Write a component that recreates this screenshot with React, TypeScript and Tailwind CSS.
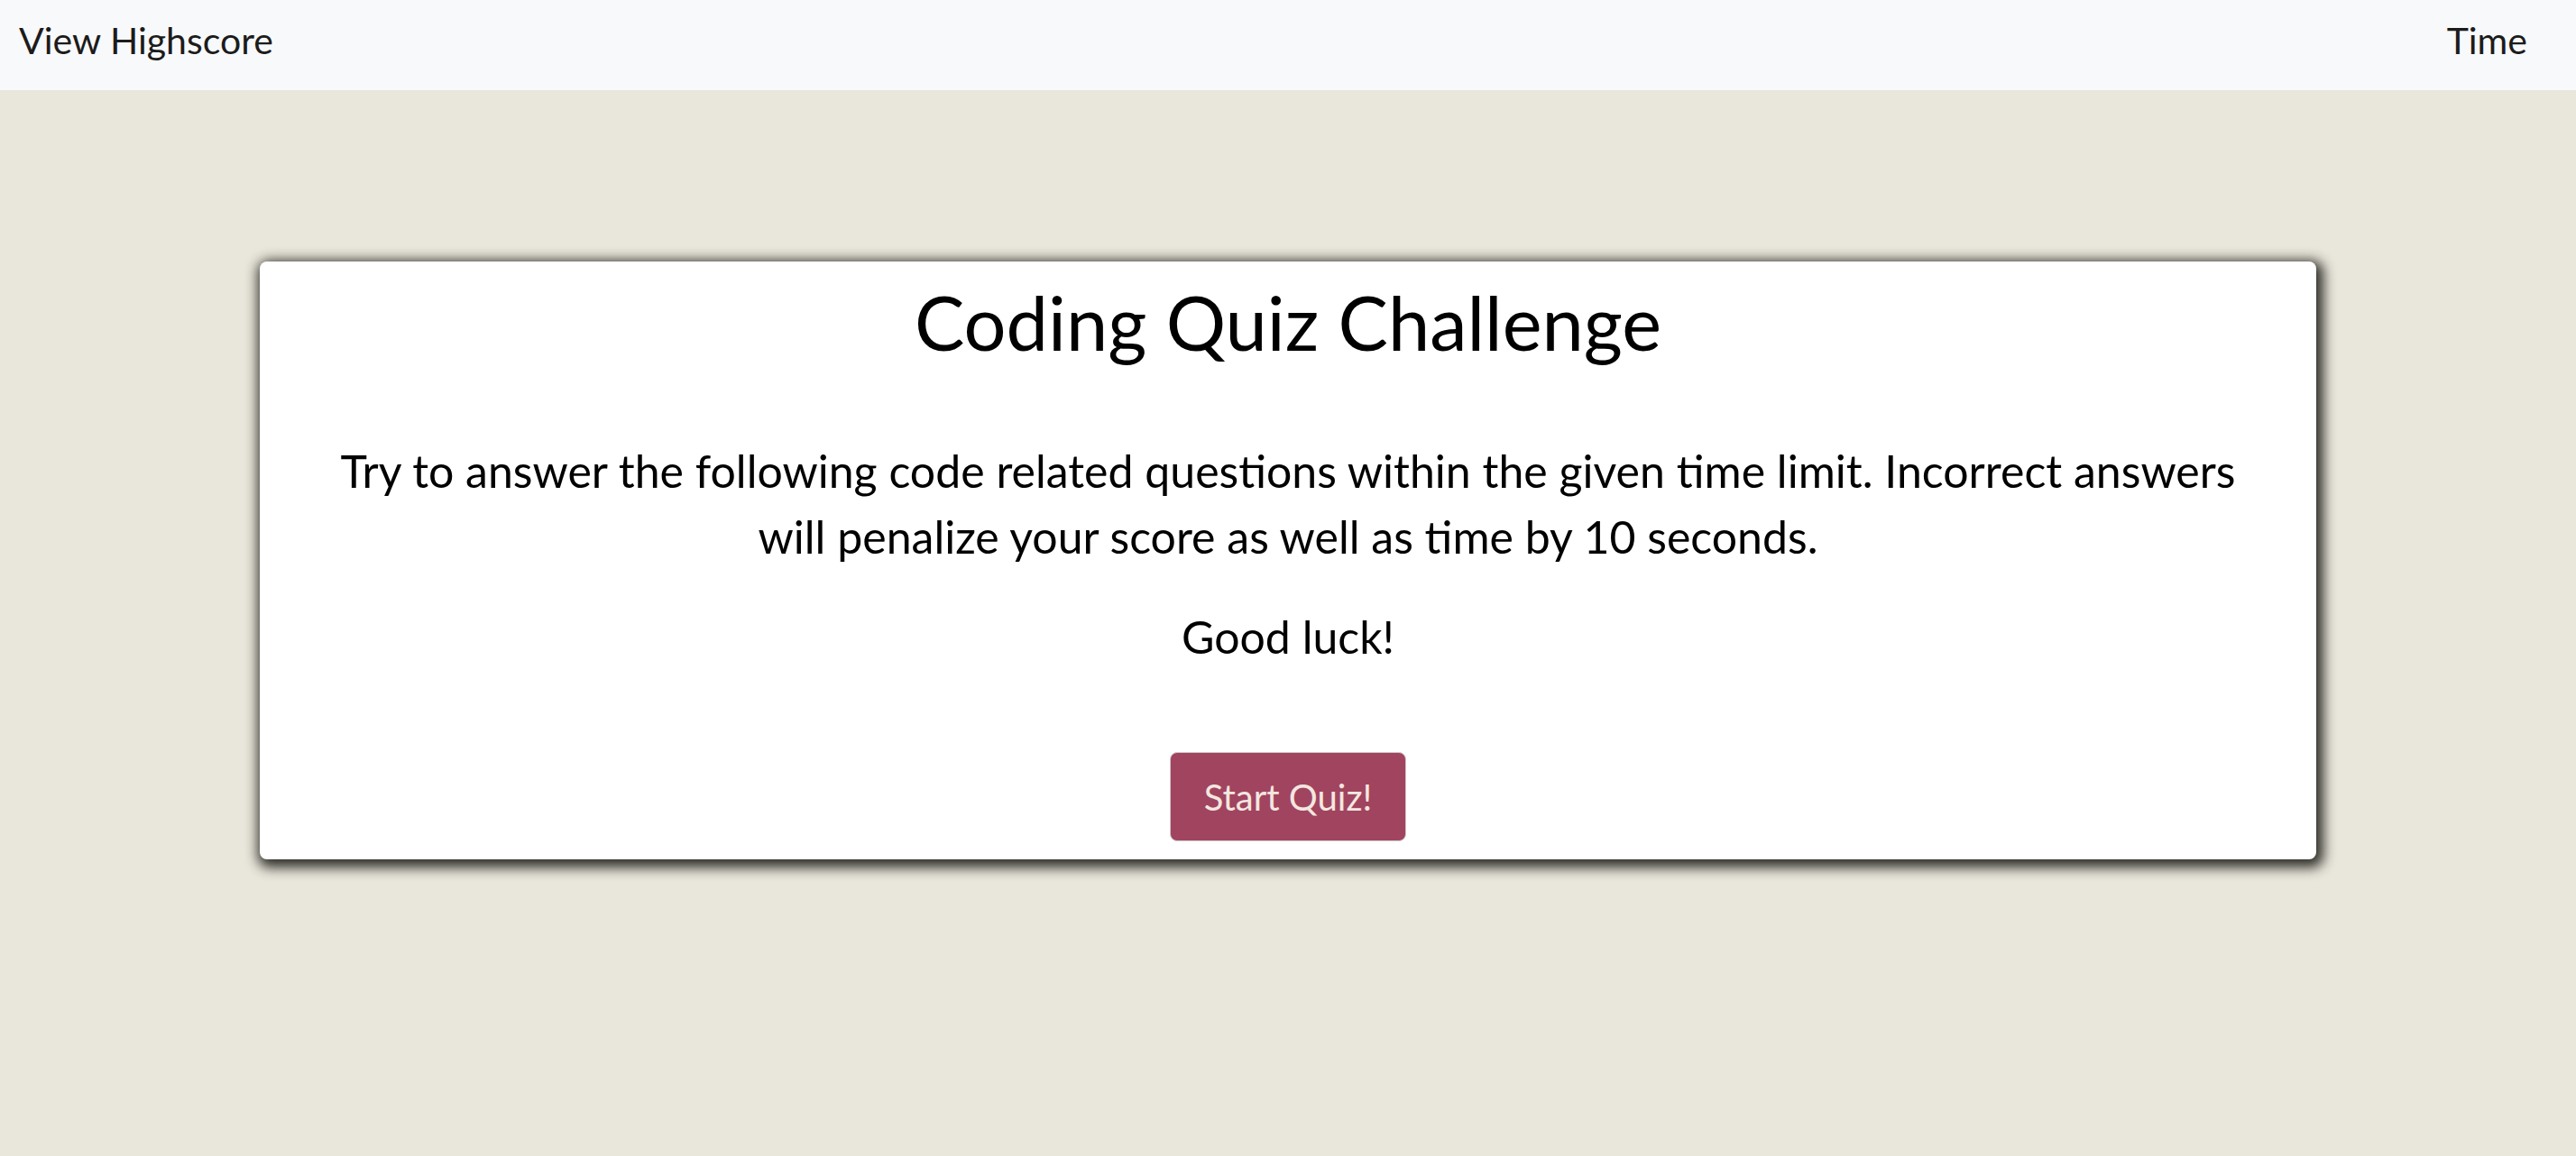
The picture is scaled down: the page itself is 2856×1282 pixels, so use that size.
import React from "react";

export default function App() {
  return (
    <div className="min-h-screen w-full bg-[#e9e6db] text-black" style={{ fontFamily: "Lato, 'Noto Sans', sans-serif" }}>
      <nav className="w-full h-[100px] bg-[#f8f9fa] flex justify-between items-center px-[21px] pb-[12px] text-[41px] text-[#1c1c1c]">
        <a href="#" className="leading-none">View Highscore</a>
        <div className="leading-none pr-[33px]">Time</div>
      </nav>

      <div className="w-[2280px] mx-auto mt-[190px] bg-white rounded-[8px] shadow-[3px_4px_14px_5px_rgba(20,20,15,0.88)] flex flex-col items-center pt-[19px] pb-[20px]">
        <h1 className="text-[83px] leading-[96px] font-normal">Coding Quiz Challenge</h1>
        <p className="mt-[81px] text-[50px] leading-[73px] text-center">
          Try to answer the following code related questions within the given time limit. Incorrect answers
          <br />
          will penalize your score as well as time by 10 seconds.
        </p>
        <p className="mt-[38px] text-[50px] leading-[73px]">Good luck!</p>
        <button className="mt-[91px] w-[262px] h-[99px] bg-[#a1445f] border border-[#cfc9c9] rounded-[8px] text-[40px] text-[#f3e7e0] leading-none">
          Start Quiz!
        </button>
      </div>
    </div>
  );
}
